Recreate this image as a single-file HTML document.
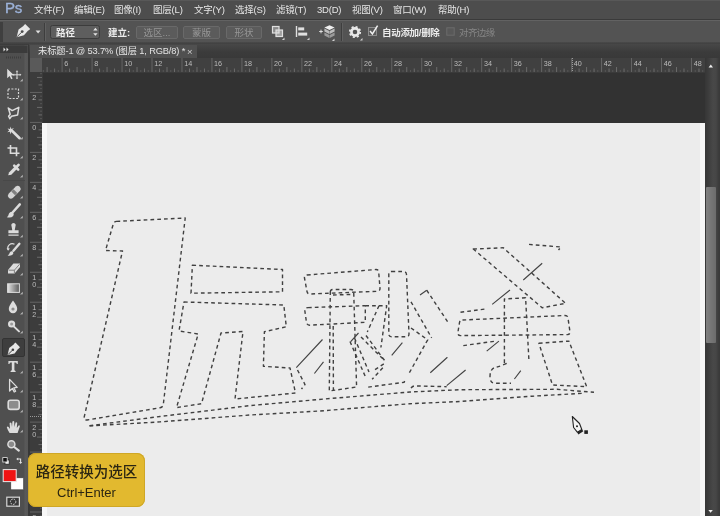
<!DOCTYPE html>
<html lang="zh">
<head>
<meta charset="utf-8">
<title>Photoshop</title>
<style>
html,body{margin:0;padding:0;}
body{width:720px;height:516px;overflow:hidden;background:#535353;position:relative;
 font-family:"Liberation Sans","Noto Sans CJK SC",sans-serif;}
.abs{position:absolute;}
#menubar{left:0;top:0;width:720px;height:19px;background:#4d4d4d;border-top:1px solid #585858;box-sizing:border-box;}
#menubar span{position:absolute;top:2px;font-size:9.5px;line-height:13px;color:#e6e6e6;white-space:nowrap;letter-spacing:-0.2px;}
#menubar #ps{left:4.5px;top:-3px;-webkit-text-stroke:0.35px #9db3da;font-size:15px;line-height:20px;color:#9db3da;letter-spacing:-0.2px;}
#optbar{left:0;top:19px;width:720px;height:25px;background:#535353;border-top:1px solid #3a3a3a;box-sizing:border-box;box-shadow:inset 0 1px 0 #626262;}
#optbar span.t{position:absolute;font-size:9.5px;line-height:13px;color:#ececec;white-space:nowrap;}
.btn{position:absolute;top:6px;height:13px;box-sizing:border-box;border:1px solid #696969;background:#5b5b5b;border-radius:2px;color:#969696;font-size:9.5px;line-height:11px;text-align:center;white-space:nowrap;}
#optshadow{left:0;top:42px;width:720px;height:3px;background:linear-gradient(#4a4a4a,#3a3a3a);}
#tools{left:0;top:45px;width:27.5px;height:471px;background:linear-gradient(90deg,#4f4f4f 0,#4f4f4f 24px,#595959 25px,#575757 27px);border-right:2.5px solid #383838;}
#tabbar{left:29px;top:44px;width:691px;height:14px;background:linear-gradient(#474747,#3b3b3b 60%,#393939);}
#tab{left:30px;top:45px;width:167px;height:13px;background:#505050;color:#e4e4e4;font-size:9.3px;line-height:13px;white-space:nowrap;letter-spacing:-0.15px;}
#tabx{position:absolute;left:157px;top:-0.5px;font-size:9.5px;color:#d0d0d0}
#hruler{left:30px;top:58px;width:675px;height:14px;background:#404040;}
#vruler{left:30px;top:72px;width:12px;height:444px;background:#3c3c3c;}
#rcorner{left:30px;top:58px;width:12px;height:14px;background:#5a5a5a;}
svg text{font-family:"Liberation Sans",sans-serif;}
#hruler text,#vruler text{font-size:7.2px;fill:#bcbcbc;}
#paste{left:42px;top:72px;width:663px;height:51px;background:#323232;box-shadow:inset 1px 1px 0 #3a3a3a;}
#canvas{left:42px;top:122.5px;width:663px;height:394px;background:linear-gradient(90deg,#f7f7f7 0,#f7f7f7 4.5px,#ececec 5.5px,#ececec 657.5px,#f6f6f6 658.5px);}
#vscroll{left:705px;top:58px;width:15px;height:458px;background:linear-gradient(90deg,#363636,#3c3c3c 3px,#484848 8px,#464646 11px,#3a3a3a 14px);}
#thumb{left:706px;top:187px;width:10px;height:156px;background:linear-gradient(90deg,#808080,#6c6c6c);border-radius:1px;}
#tip{left:28px;top:453px;width:117px;height:54px;border-radius:8px;background:#e2b92f;color:#2b2612;text-align:center;box-shadow:inset 0 0 0 1px #cfa726;}
#tip .l1{font-size:14.5px;line-height:18px;margin-top:9.5px;font-weight:500;}
#tip .l2{font-size:13px;line-height:16px;margin-top:4.5px;}
#menubar span,#optbar span.t,.btn,#tab span,#tip div{will-change:transform;}
#hruler svg,#vruler svg{will-change:transform;}

</style>
</head>
<body>
<div id="menubar" class="abs">
<span id="ps">Ps</span>
<span style="left:34px">文件(F)</span>
<span style="left:74px">编辑(E)</span>
<span style="left:114px">图像(I)</span>
<span style="left:153px">图层(L)</span>
<span style="left:194px">文字(Y)</span>
<span style="left:235px">选择(S)</span>
<span style="left:276px">滤镜(T)</span>
<span style="left:317px">3D(D)</span>
<span style="left:352px">视图(V)</span>
<span style="left:393px">窗口(W)</span>
<span style="left:438px">帮助(H)</span>
</div>
<div id="optbar" class="abs">
<div class="abs" style="left:0;top:2px;width:3px;height:20px;background:#3f3f3f"></div>
<svg class="abs" style="left:0;top:0" width="720" height="24" viewBox="0 20 720 24">
<!-- pen icon -->
<path d="M16.6,37.2 L18.6,29.6 L24.4,25.2 L28.8,29.8 L24,35.2Z" fill="#e8e8e8"/>
<path d="M25.2,24 L30.2,29 L28.6,30.6 L23.6,25.6Z" fill="#e8e8e8"/>
<path d="M17,36.8 L21.6,32.2" stroke="#4c4c4c" stroke-width="1"/>
<circle cx="22.2" cy="31.6" r="1.4" fill="#4c4c4c"/>
<path d="M35.6,30.6 h5 l-2.5,3z" fill="#e0e0e0"/>
<path d="M44.5,23 V41" stroke="#3e3e3e" stroke-width="1"/><path d="M45.5,23 V41" stroke="#606060" stroke-width="1"/>
<!-- dropdown -->
<rect x="50.5" y="25.5" width="49" height="13" rx="2" fill="#5e5e5e" stroke="#3c3c3c" stroke-width="1"/>
<path d="M93.2,30.4 l2.2,-2.6 l2.2,2.6z M93.2,33.2 l2.2,2.6 l2.2,-2.6z" fill="#e4e4e4"/>
<!-- icons -->
<rect x="272.5" y="26.5" width="6.5" height="6.5" fill="#8a8a8a" stroke="#e0e0e0" stroke-width="1.2"/>
<rect x="276" y="30" width="6.5" height="6.5" fill="#e0e0e0" fill-opacity="0.55" stroke="#e0e0e0" stroke-width="1.2"/>
<path d="M284.5,40 v-2.6 l-2.6,2.6z" fill="#d0d0d0"/>
<path d="M296.5,26 V37" stroke="#e0e0e0" stroke-width="1.4"/>
<rect x="298.2" y="27.4" width="6" height="3" fill="#e0e0e0"/>
<rect x="298.2" y="32.6" width="9" height="3" fill="#e0e0e0"/>
<path d="M309.5,40 v-2.6 l-2.6,2.6z" fill="#d0d0d0"/>
<path d="M319.2,31.5 h3.6 M321,29.7 v3.6" stroke="#e0e0e0" stroke-width="1"/>
<path d="M329.5,25.2 L334.6,27.6 L329.5,30 L324.4,27.6Z" fill="#efefef"/>
<path d="M324.4,28.6 L329.3,31 V34 L324.4,31.6Z M334.6,28.6 L329.7,31 V34 L334.6,31.6Z" fill="#bdbdbd"/>
<path d="M324.4,32.6 L329.3,35 V38 L324.4,35.6Z M334.6,32.6 L329.7,35 V38 L334.6,35.6Z" fill="#9a9a9a"/>
<path d="M334.5,41 v-2.6 l-2.6,2.6z" fill="#d0d0d0"/>
<path d="M341.5,23 V41" stroke="#3e3e3e" stroke-width="1"/><path d="M342.5,23 V41" stroke="#606060" stroke-width="1"/>
<!-- gear -->
<circle cx="355" cy="32" r="3.6" fill="none" stroke="#e8e8e8" stroke-width="2.6"/>
<circle cx="355" cy="32" r="5.2" fill="none" stroke="#e8e8e8" stroke-width="1.8" stroke-dasharray="2.04 2.04"/>
<path d="M362.5,40.5 v-2.6 l-2.6,2.6z" fill="#d0d0d0"/>
<!-- checkbox -->
<rect x="368.5" y="27.5" width="8" height="8" fill="#5a5a5a" stroke="#8c8c8c" stroke-width="1"/>
<path d="M370,31 L372.4,34 L377.6,25.6" fill="none" stroke="#f0f0f0" stroke-width="1.5"/>
<rect x="446.8" y="27.8" width="7.4" height="7.4" fill="#585858" stroke="#6c6c6c" stroke-width="1"/>
</svg>
<span class="t" style="left:56px;top:5.5px;font-weight:bold">路径</span>
<span class="t" style="left:107.5px;top:5.5px;font-weight:bold">建立:</span>
<span class="t" style="left:381.5px;top:5.5px;font-weight:bold;letter-spacing:-0.3px">自动添加/删除</span>
<span class="t" style="left:459px;top:5.5px;color:#868686;letter-spacing:-0.6px">对齐边缘</span>
<div class="btn" style="left:136px;width:42px">选区...</div>
<div class="btn" style="left:183px;width:37px">蒙版</div>
<div class="btn" style="left:226px;width:36px">形状</div>
</div>
<div id="optshadow" class="abs"></div>
<div id="tools" class="abs"></div>
<svg id="toolsvg" class="abs" style="left:0;top:44px" width="29" height="472" viewBox="0 44 29 472">
<rect x="0" y="45.5" width="27.5" height="7.5" fill="#3b3b3b"/>
<path d="M3.5,47.5 L5.5,49.5 L3.5,51.5Z M6.5,47.5 L8.5,49.5 L6.5,51.5Z" fill="#e6e6e6"/>
<path d="M6,57.5H21" stroke="#3e3e3e" stroke-width="2" stroke-dasharray="1 1"/>
<g fill="#3a3a3a">
<path d="M23,82 v-2.5 l-2.5,2.5z M23,101 v-2.5 l-2.5,2.5z M23,120 v-2.5 l-2.5,2.5z M23,140 v-2.5 l-2.5,2.5z M23,159 v-2.5 l-2.5,2.5z M23,178 v-2.5 l-2.5,2.5z M23,199 v-2.5 l-2.5,2.5z M23,219 v-2.5 l-2.5,2.5z M23,238 v-2.5 l-2.5,2.5z M23,257 v-2.5 l-2.5,2.5z M23,276 v-2.5 l-2.5,2.5z M23,295 v-2.5 l-2.5,2.5z M23,315 v-2.5 l-2.5,2.5z M23,334 v-2.5 l-2.5,2.5z M23,374 v-2.5 l-2.5,2.5z M23,393 v-2.5 l-2.5,2.5z M23,413 v-2.5 l-2.5,2.5z M23,433 v-2.5 l-2.5,2.5z"/>
</g>
<g fill="#b4b4b4"><path d="M22.8,81.5 v-2.8 l-2.8,2.8z M22.8,100.5 v-2.8 l-2.8,2.8z M22.8,119.5 v-2.8 l-2.8,2.8z M22.8,139.5 v-2.8 l-2.8,2.8z M22.8,158.5 v-2.8 l-2.8,2.8z M22.8,177.5 v-2.8 l-2.8,2.8z M22.8,198.5 v-2.8 l-2.8,2.8z M22.8,218.5 v-2.8 l-2.8,2.8z M22.8,237.5 v-2.8 l-2.8,2.8z M22.8,256.5 v-2.8 l-2.8,2.8z M22.8,275.5 v-2.8 l-2.8,2.8z M22.8,294.5 v-2.8 l-2.8,2.8z M22.8,314.5 v-2.8 l-2.8,2.8z M22.8,333.5 v-2.8 l-2.8,2.8z M22.8,373.5 v-2.8 l-2.8,2.8z M22.8,392.5 v-2.8 l-2.8,2.8z M22.8,412.5 v-2.8 l-2.8,2.8z M22.8,432.5 v-2.8 l-2.8,2.8z"/></g>
<!-- move -->
<path d="M7.2,68.8 L7.2,78.2 L9.6,76 L11.2,79.2 L12.6,78.5 L11.1,75.4 L14,75.2Z" fill="#dcdcdc"/>
<path d="M17,71.5V78 M13.8,74.8H20.2" stroke="#dcdcdc" stroke-width="1"/>
<path d="M17,70.2l1.3,1.6h-2.6z M17,79.3l1.3,-1.6h-2.6z M12.6,74.8l1.6,-1.3v2.6z M21.4,74.8l-1.6,-1.3v2.6z" fill="#dcdcdc"/>
<!-- marquee -->
<rect x="8" y="89" width="10.5" height="9.5" fill="none" stroke="#d8d8d8" stroke-width="1.2" stroke-dasharray="2 1.4"/>
<!-- lasso -->
<path d="M8.3,108 L12.2,110.6 L18.8,107.4 L17.6,115 L11.5,116.3 L9.8,118.6 L8.6,116.2 L10.2,114.3Z" fill="none" stroke="#dcdcdc" stroke-width="1.5" stroke-linejoin="round"/>
<!-- wand -->
<path d="M12.5,131.2 L19.6,138.2" stroke="#dcdcdc" stroke-width="2.6" stroke-linecap="round"/>
<path d="M10.5,126.5 l0.9,2.4 l2.5,-0.9 l-1.6,2.1 l1.8,1.8 l-2.6,-0.3 l-0.8,2.6 l-0.9,-2.5 l-2.6,0.6 l2,-1.9 l-1.6,-2 l2.4,0.5z" fill="#dcdcdc"/>
<!-- crop -->
<path d="M10.5,145 V153.2 H19.5 M7.5,148 H16.5 V156.2" fill="none" stroke="#dcdcdc" stroke-width="1.6"/>
<!-- eyedropper -->
<path d="M8.2,175.3 L9,172.4 L14.6,166.8 L16.9,169.1 L11.3,174.7Z" fill="#dcdcdc"/>
<path d="M14.2,165.6 L18.2,169.6 M16,167.5 L18.6,164.9" stroke="#dcdcdc" stroke-width="2.6" stroke-linecap="round"/>
<!-- divider -->
<path d="M3,180.5H25" stroke="#484848" stroke-width="1"/>
<!-- healing -->
<path d="M8.6,193.8 L15.8,186.6 Q17.8,185 19.8,186.8 Q21.6,188.8 20,190.8 L12.8,198 Q10.8,199.6 8.8,197.8 Q7,195.8 8.6,193.8Z" fill="#d4d4d4"/>
<path d="M12.4,190.4 l3.8,3.8" stroke="#808080" stroke-width="3.2"/>
<!-- brush -->
<path d="M19.8,204.4 L13,212" stroke="#dcdcdc" stroke-width="2.5" stroke-linecap="round"/>
<path d="M6.8,217.2 Q8.6,216 9,213.6 Q10.2,211.4 12.8,212 Q14.6,213.8 13.2,216 Q11,218.4 6.8,217.2Z" fill="#dcdcdc"/>
<!-- stamp -->
<path d="M11.6,226.4 a2.2,2.2 0 1 1 3.8,0 L14.7,230.2 H18.6 V233.2 H8.4 V230.2 H12.3Z M8.4,234.4H18.6V235.8H8.4Z" fill="#dcdcdc"/>
<!-- history brush -->
<path d="M19.4,243.8 L13.4,250.8" stroke="#dcdcdc" stroke-width="2.4" stroke-linecap="round"/>
<path d="M7.6,255.4 Q9.4,254.6 9.8,252.6 Q10.8,251 12.6,251.4 Q13.8,252.6 13,254.2 Q11.2,256.2 7.6,255.4Z" fill="#dcdcdc"/>
<path d="M8,249.5 A4.5,4.5 0 0 1 14.5,244.2" fill="none" stroke="#dcdcdc" stroke-width="1.2"/>
<path d="M6.6,248.2 l1.5,2.6 l1.8,-2.4z" fill="#dcdcdc"/>
<!-- eraser -->
<path d="M8,270 L13.4,263.6 L20,263.6 L20,267 L14.6,273.4 L8,273.4Z" fill="#dcdcdc"/>
<path d="M8.6,270.2 H14.4 L19.6,264.2 M14.4,270.2V273" stroke="#6a6a6a" stroke-width="0.8" fill="none"/>
<!-- gradient -->
<defs><linearGradient id="gr" x1="0" x2="1" y1="0" y2="0"><stop offset="0" stop-color="#e4e4e4"/><stop offset="1" stop-color="#5a5a5a"/></linearGradient></defs>
<rect x="7.6" y="283.8" width="11.8" height="8.6" fill="url(#gr)" stroke="#dcdcdc" stroke-width="1"/>
<!-- blur -->
<path d="M13,300.6 Q17.4,306.4 17.2,309 A4.2,4.2 0 0 1 8.8,309 Q8.6,306.4 13,300.6Z" fill="#dcdcdc"/>
<circle cx="13" cy="309" r="1.6" fill="#8a8a8a"/>
<!-- dodge -->
<circle cx="11.6" cy="324" r="3.6" fill="#dcdcdc"/>
<path d="M14,326.6 L19,331.4" stroke="#dcdcdc" stroke-width="2" stroke-linecap="round"/>
<circle cx="11.6" cy="324" r="1.5" fill="#9a9a9a"/>
<!-- pen selected -->
<rect x="2.5" y="338.5" width="22" height="18" rx="1.5" fill="#3e3e3e" stroke="#333" stroke-width="1"/>
<path d="M7.6,355 L9.2,348 L14.6,343.8 L18.8,348 L14.6,353.4Z" fill="#e6e6e6"/>
<path d="M15.4,342.6 L20,347.2 L18.4,348.8 L13.8,344.2Z" fill="#e6e6e6"/>
<path d="M8,354.6 L12.4,350.2" stroke="#3e3e3e" stroke-width="1"/>
<circle cx="12.9" cy="349.7" r="1.3" fill="#3e3e3e"/>
<!-- T -->
<path d="M8.4,361 H17.8 V364 H16.8 Q16.6,362.6 15.2,362.6 H14.4 V370 Q14.4,370.8 15.6,370.9 V371.9 H10.6 V370.9 Q11.8,370.8 11.8,370 V362.6 H11 Q9.6,362.6 9.4,364 H8.4Z" fill="#dcdcdc"/>
<!-- path select -->
<path d="M9.6,379.4 L9.6,391 L12.4,388.4 L14.2,392 L15.6,391.2 L13.8,387.8 L17.2,387.4Z" fill="none" stroke="#dcdcdc" stroke-width="1.3" stroke-linejoin="round"/>
<!-- shape -->
<rect x="8.2" y="400.2" width="11" height="9.2" rx="2.2" fill="#8c8c8c" stroke="#dcdcdc" stroke-width="1.6"/>
<!-- hand -->
<path d="M9.6,433 Q7.6,430 6.8,427.2 Q7.6,426 8.8,427.2 L10,429 L9.6,423 Q10.4,421.8 11.4,423 L12,427 L12.4,421.6 Q13.4,420.4 14.2,421.6 L14.4,427 L15.6,422.6 Q16.6,421.8 17.2,423 L16.8,428 L18.6,425.4 Q19.8,425 19.8,426.4 Q18.6,430 17.6,433Z" fill="#dcdcdc"/>
<!-- zoom -->
<circle cx="11.4" cy="444.2" r="3.5" fill="#8a8a8a" stroke="#dcdcdc" stroke-width="1.5"/>
<path d="M14.2,447 L18.8,450.6" stroke="#dcdcdc" stroke-width="2.2" stroke-linecap="round"/>
<!-- default colors -->
<rect x="5" y="460" width="4.2" height="4.2" fill="#f0f0f0" stroke="#222" stroke-width="0.8"/>
<rect x="2.8" y="457.6" width="4.4" height="4.4" fill="#111" stroke="#e8e8e8" stroke-width="0.8"/>
<!-- swap -->
<path d="M17.6,459 H20.6 V462.4" fill="none" stroke="#e0e0e0" stroke-width="1.1"/>
<path d="M16.2,459 l2,-1.6 v3.2z M20.6,464 l-1.6,-2 h3.2z" fill="#e0e0e0"/>
<!-- bg / fg -->
<rect x="10.8" y="477.8" width="12.8" height="12" fill="#ffffff" stroke="#3a3a3a" stroke-width="0.6"/>
<rect x="3.2" y="469.6" width="13" height="12" fill="#f01414" stroke="#e9e9e9" stroke-width="1"/>
<!-- quick mask -->
<rect x="6.8" y="497.2" width="12.6" height="9" fill="#3a3a3a" stroke="#d8d8d8" stroke-width="1.2"/>
<circle cx="13.1" cy="501.7" r="2.7" fill="none" stroke="#d8d8d8" stroke-width="1" stroke-dasharray="1.6 1"/>
</svg>
<div id="tabbar" class="abs"></div>
<div id="tab" class="abs"><span style="position:absolute;left:8px;top:0">未标题-1 @ 53.7% (图层 1, RGB/8) *</span><span id="tabx">×</span></div>
<div id="hruler" class="abs"><svg width="675" height="14" viewBox="0 0 675 14">
<path d="M32.10,0V14 M62.07,0V14 M92.04,0V14 M122.01,0V14 M151.98,0V14 M181.95,0V14 M211.92,0V14 M241.89,0V14 M271.86,0V14 M301.83,0V14 M331.80,0V14 M361.77,0V14 M391.74,0V14 M421.71,0V14 M451.68,0V14 M481.65,0V14 M511.62,0V14 M541.59,0V14 M571.56,0V14 M601.53,0V14 M631.50,0V14 M661.47,0V14" stroke="#646464" stroke-width="1" fill="none"/>
<path d="M17.12,9V14 M47.09,9V14 M77.06,9V14 M107.03,9V14 M137.00,9V14 M166.97,9V14 M196.93,9V14 M226.91,9V14 M256.88,9V14 M286.85,9V14 M316.81,9V14 M346.79,9V14 M376.75,9V14 M406.73,9V14 M436.69,9V14 M466.67,9V14 M496.63,9V14 M526.61,9V14 M556.58,9V14 M586.54,9V14 M616.51,9V14 M646.49,9V14 M24.61,10.5V14 M39.59,10.5V14 M54.58,10.5V14 M69.56,10.5V14 M84.55,10.5V14 M99.53,10.5V14 M114.52,10.5V14 M129.50,10.5V14 M144.49,10.5V14 M159.47,10.5V14 M174.46,10.5V14 M189.44,10.5V14 M204.43,10.5V14 M219.41,10.5V14 M234.40,10.5V14 M249.38,10.5V14 M264.37,10.5V14 M279.35,10.5V14 M294.34,10.5V14 M309.32,10.5V14 M324.31,10.5V14 M339.29,10.5V14 M354.28,10.5V14 M369.26,10.5V14 M384.25,10.5V14 M399.23,10.5V14 M414.22,10.5V14 M429.20,10.5V14 M444.19,10.5V14 M459.17,10.5V14 M474.16,10.5V14 M489.14,10.5V14 M504.13,10.5V14 M519.11,10.5V14 M534.10,10.5V14 M549.08,10.5V14 M564.07,10.5V14 M579.05,10.5V14 M594.04,10.5V14 M609.02,10.5V14 M624.01,10.5V14 M638.99,10.5V14 M653.98,10.5V14 M668.96,10.5V14" stroke="#707070" stroke-width="0.9" fill="none"/>
<path d="M13.37,12V14 M20.86,12V14 M28.35,12V14 M35.85,12V14 M43.34,12V14 M50.83,12V14 M58.32,12V14 M65.82,12V14 M73.31,12V14 M80.80,12V14 M88.29,12V14 M95.79,12V14 M103.28,12V14 M110.77,12V14 M118.26,12V14 M125.76,12V14 M133.25,12V14 M140.74,12V14 M148.23,12V14 M155.73,12V14 M163.22,12V14 M170.71,12V14 M178.20,12V14 M185.70,12V14 M193.19,12V14 M200.68,12V14 M208.17,12V14 M215.67,12V14 M223.16,12V14 M230.65,12V14 M238.14,12V14 M245.64,12V14 M253.13,12V14 M260.62,12V14 M268.11,12V14 M275.61,12V14 M283.10,12V14 M290.59,12V14 M298.08,12V14 M305.58,12V14 M313.07,12V14 M320.56,12V14 M328.05,12V14 M335.55,12V14 M343.04,12V14 M350.53,12V14 M358.02,12V14 M365.52,12V14 M373.01,12V14 M380.50,12V14 M387.99,12V14 M395.49,12V14 M402.98,12V14 M410.47,12V14 M417.96,12V14 M425.46,12V14 M432.95,12V14 M440.44,12V14 M447.93,12V14 M455.43,12V14 M462.92,12V14 M470.41,12V14 M477.90,12V14 M485.40,12V14 M492.89,12V14 M500.38,12V14 M507.87,12V14 M515.37,12V14 M522.86,12V14 M530.35,12V14 M537.84,12V14 M545.34,12V14 M552.83,12V14 M560.32,12V14 M567.81,12V14 M575.31,12V14 M582.80,12V14 M590.29,12V14 M597.78,12V14 M605.28,12V14 M612.77,12V14 M620.26,12V14 M627.75,12V14 M635.25,12V14 M642.74,12V14 M650.23,12V14 M657.72,12V14 M665.22,12V14 M672.71,12V14" stroke="#5c5c5c" stroke-width="0.8" fill="none"/>
<path d="M542.5,0V14" stroke="#9a9a9a" stroke-width="1" stroke-dasharray="1 1"/>
<text x="34.3" y="8.2">6</text>
<text x="64.3" y="8.2">8</text>
<text x="94.2" y="8.2">10</text>
<text x="124.2" y="8.2">12</text>
<text x="154.2" y="8.2">14</text>
<text x="184.1" y="8.2">16</text>
<text x="214.1" y="8.2">18</text>
<text x="244.1" y="8.2">20</text>
<text x="274.1" y="8.2">22</text>
<text x="304.0" y="8.2">24</text>
<text x="334.0" y="8.2">26</text>
<text x="364.0" y="8.2">28</text>
<text x="393.9" y="8.2">30</text>
<text x="423.9" y="8.2">32</text>
<text x="453.9" y="8.2">34</text>
<text x="483.8" y="8.2">36</text>
<text x="513.8" y="8.2">38</text>
<text x="543.8" y="8.2">40</text>
<text x="573.8" y="8.2">42</text>
<text x="603.7" y="8.2">44</text>
<text x="633.7" y="8.2">46</text>
<text x="663.7" y="8.2">48</text>
</svg></div>
<div id="vruler" class="abs"><svg width="12" height="444" viewBox="0 0 12 444">
<path d="M0,20.43H12 M0,50.40H12 M0,80.37H12 M0,110.34H12 M0,140.31H12 M0,170.28H12 M0,200.25H12 M0,230.22H12 M0,260.19H12 M0,290.16H12 M0,320.13H12 M0,350.10H12 M0,380.07H12 M0,410.04H12 M0,440.01H12" stroke="#646464" stroke-width="1" fill="none"/>
<path d="M7,5.45H12 M7,35.42H12 M7,65.38H12 M7,95.36H12 M7,125.32H12 M7,155.30H12 M7,185.26H12 M7,215.24H12 M7,245.21H12 M7,275.17H12 M7,305.14H12 M7,335.12H12 M7,365.09H12 M7,395.05H12 M7,425.02H12 M8.5,12.94H12 M8.5,27.92H12 M8.5,42.91H12 M8.5,57.89H12 M8.5,72.88H12 M8.5,87.86H12 M8.5,102.85H12 M8.5,117.83H12 M8.5,132.82H12 M8.5,147.80H12 M8.5,162.79H12 M8.5,177.77H12 M8.5,192.76H12 M8.5,207.74H12 M8.5,222.73H12 M8.5,237.71H12 M8.5,252.70H12 M8.5,267.68H12 M8.5,282.67H12 M8.5,297.65H12 M8.5,312.64H12 M8.5,327.62H12 M8.5,342.61H12 M8.5,357.59H12 M8.5,372.58H12 M8.5,387.56H12 M8.5,402.55H12 M8.5,417.53H12 M8.5,432.52H12" stroke="#707070" stroke-width="0.9" fill="none"/>
<path d="M10,1.70H12 M10,9.19H12 M10,16.68H12 M10,24.18H12 M10,31.67H12 M10,39.16H12 M10,46.65H12 M10,54.15H12 M10,61.64H12 M10,69.13H12 M10,76.62H12 M10,84.12H12 M10,91.61H12 M10,99.10H12 M10,106.59H12 M10,114.09H12 M10,121.58H12 M10,129.07H12 M10,136.56H12 M10,144.06H12 M10,151.55H12 M10,159.04H12 M10,166.53H12 M10,174.03H12 M10,181.52H12 M10,189.01H12 M10,196.50H12 M10,204.00H12 M10,211.49H12 M10,218.98H12 M10,226.47H12 M10,233.97H12 M10,241.46H12 M10,248.95H12 M10,256.44H12 M10,263.94H12 M10,271.43H12 M10,278.92H12 M10,286.41H12 M10,293.91H12 M10,301.40H12 M10,308.89H12 M10,316.38H12 M10,323.88H12 M10,331.37H12 M10,338.86H12 M10,346.35H12 M10,353.85H12 M10,361.34H12 M10,368.83H12 M10,376.32H12 M10,383.82H12 M10,391.31H12 M10,398.80H12 M10,406.29H12 M10,413.79H12 M10,421.28H12 M10,428.77H12 M10,436.26H12 M10,443.76H12" stroke="#5c5c5c" stroke-width="0.8" fill="none"/>
<path d="M0,344.5H12" stroke="#9a9a9a" stroke-width="1" stroke-dasharray="1 1"/>
<text x="2.2" y="28.0">2</text>
<text x="2.2" y="58.0">0</text>
<text x="2.2" y="88.0">2</text>
<text x="2.2" y="117.9">4</text>
<text x="2.2" y="147.9">6</text>
<text x="2.2" y="177.9">8</text>
<text x="2.2" y="207.8">1</text>
<text x="2.2" y="215.2">0</text>
<text x="2.2" y="237.8">1</text>
<text x="2.2" y="245.2">2</text>
<text x="2.2" y="267.8">1</text>
<text x="2.2" y="275.2">4</text>
<text x="2.2" y="297.8">1</text>
<text x="2.2" y="305.2">6</text>
<text x="2.2" y="327.7">1</text>
<text x="2.2" y="335.1">8</text>
<text x="2.2" y="357.7">2</text>
<text x="2.2" y="365.1">0</text>
<text x="2.2" y="387.7">2</text>
<text x="2.2" y="395.1">2</text>
<text x="2.2" y="417.6">2</text>
<text x="2.2" y="425.0">4</text>
<text x="2.2" y="447.6">2</text>
<text x="2.2" y="455.0">6</text>
</svg></div>
<div id="rcorner" class="abs"></div>
<div id="paste" class="abs"></div>
<div id="canvas" class="abs"></div>
<svg id="art" class="abs" style="left:0;top:0" width="720" height="516" viewBox="0 0 720 516">
<g fill="none" stroke="#404040" stroke-width="1.4" stroke-dasharray="3.7 3.1" stroke-linejoin="round">
<!-- 1 -->
<path d="M116.5,221.4 L185.2,218 L163.3,404.5 Q162.8,407.3 160,407.8 L87,420 Q83.4,420.3 84.2,417 L122.5,251 L105.5,250.5 L113.3,224 Q114,221.6 116.5,221.4Z"/>
<!-- yuan top bar -->
<path d="M192.4,265.2 L282.5,269.5 L282.5,291.8 L191,293.2Z"/>
<!-- yuan body -->
<path d="M184,302 L283.8,305 L286.3,326.8 L264.4,331.7 L263.4,366.3 L290,368 L295.5,393 L235,399 L243,331.5 L221,333 L201.5,403.7 L176.5,407.6 L198.2,334 L179,331Z"/>
<path d="M297.5,370 L305,384.5 L301.5,389"/>
<!-- miao -->
<path d="M307,275 L376,269.5 Q378.5,269.5 378.7,272 L380,288.5 Q380,291 377.5,291.3 L310,294 Q307.5,294 307,291.5 L304.5,278 Q304,275.3 307,275Z"/>
<path d="M308,307.6 L365.3,305.7 L365.3,322.3 L309.5,325.2 Q307,325 306.5,322.5 L304.8,310.5 Q304.6,307.8 308,307.6Z"/>
<path d="M330.3,292 Q330.3,289.6 333,289.5 L351,289.5 Q353.6,289.6 353.7,292 L356.6,387 L329.3,391Z"/>
<path d="M333.2,326 L333.4,390"/>
<path d="M333,295 L352,294.5"/>
<path d="M361,337 L385,361 M366,335.5 L385,361"/>
<path d="M383.8,363.8 L375,369.6 M382.8,367.7 L372.1,379.3"/>
<path d="M350,341.5 L365.3,376.5 M354.5,338 L369,372"/>
<path d="M368.2,387.1 L404.2,382.3 L405.5,378"/>
<path d="M391.5,271.5 L403.5,271.5 Q406.3,271.5 406.5,274.5 L409,334 Q409,336.8 406,336.8 L391.5,336.8 Q388.8,336.8 388.8,334 L388.8,274.5 Q388.8,271.5 391.5,271.5Z"/>
<path d="M365.3,305.7 L386.7,305.7 L380.9,347.5 M379,305.7 L367.3,332"/>
<path d="M426.7,290.2 L448,322.3 M411,301.8 L431.6,337.8 M411,328 L427.7,339.8 L409.4,372.7"/>
<!-- sha -->
<path d="M473.3,249 L503.3,247.8 L565.6,303.3 L542.2,307.8Z"/>
<path d="M529,244.4 L561,247 L558.5,250"/>
<path d="M504.4,363 L504.4,299 L525.6,297.8 L528.9,360"/>
<path d="M462.5,320 L565,315.5 Q567.8,315.5 568,318 L570,332 Q570,334.5 567.5,334.6 L460.5,335.6 Q457.8,335.6 457.8,333 L459.5,322.5 Q460,320 462.5,320Z"/>
<path d="M460.5,312.3 L485.6,309"/>
<path d="M506.7,363.3 Q500,366.5 494,367.8 Q490,370 490,376.7 Q490,382.5 494,383.3 L511,383.3"/>
<path d="M463.3,345.6 L495.6,341.1"/>
<path d="M538.9,343.3 L568.9,341.1 L586.7,386.7 L552.5,385Z"/>
<!-- bottom lines -->
<path d="M89.5,425.7 L160,416.5 L250,405.6 L330,398.5 L410,392 L460,389.7 L557,389.3 L594,392.3"/>
<path d="M89.5,425.9 L160,421.9 L250,415 L320,411 L410,403.7 L460,401.5 L532,396.2 L584.5,393.2"/>
<path d="M411,388.2 Q412.5,386 415,385.9 L446.6,386.7"/>
</g>
<g fill="none" stroke="#444" stroke-width="1.15">
<path d="M322.5,339.5 L296.3,367.7 M323.5,361.8 L314.4,373.5 M358.5,333 L350.7,341.7 M402.4,342.7 L391.7,355.3 M420,295 L426.7,290.2"/>
<path d="M542.2,263.3 L523.3,280 M510,290 L492.2,304.4 M514.4,379 L520.8,370.7 M498.9,341.1 L486.7,351.1 M447.4,357.2 L430.3,372.7 M465.6,370 L446.7,385.6"/>
</g>
<!-- pen cursor -->
<g>
<path d="M572.3,416.5 L579.5,423.5 L581.8,429.5 L577.5,432.3 L573.6,427.5Z" fill="#f4f4f4" stroke="#222" stroke-width="1.1" stroke-linejoin="round"/>
<circle cx="577" cy="426.3" r="1" fill="#222"/>
<path d="M577.2,432.6 L582.2,429.4 L583.3,431.3 L578.4,434.5Z" fill="#222"/>
<rect x="584.3" y="430.3" width="3.6" height="3.6" fill="#222"/>
</g>
</svg>
<div id="vscroll" class="abs"><svg width="15" height="458" viewBox="0 0 15 458"><path d="M3.6,9.4 L5.8,6.6 L8,9.4Z" fill="#f0f0f0"/><path d="M3.4,452 L5.6,454.8 L7.8,452Z" fill="#f0f0f0"/></svg></div>
<div id="thumb" class="abs"></div>
<div id="tip" class="abs">
<div class="l1">路径转换为选区</div>
<div class="l2">Ctrl+Enter</div>
</div>
</body>
</html>
